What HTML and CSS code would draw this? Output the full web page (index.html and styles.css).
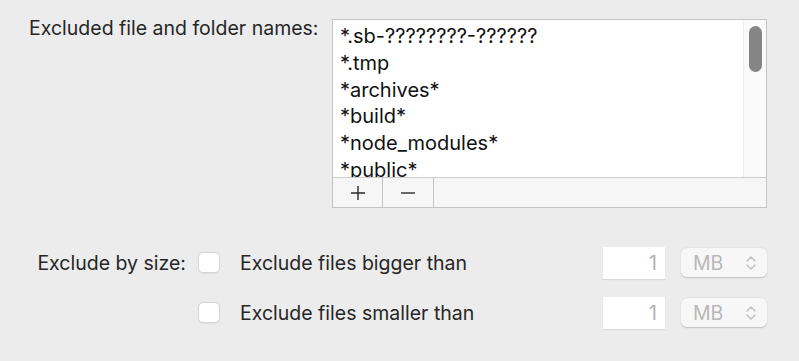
FILE: index.html
```html
<!DOCTYPE html>
<html>
<head>
<meta charset="utf-8">
<link rel="stylesheet" href="styles.css">
</head>
<body>
<div class="pane">
  <section class="names">
    <div class="names-label">Excluded file and folder names:</div>
    <div class="listbox">
      <div class="list-area">
        <ul class="list">
          <li>*.sb-????????-??????</li>
          <li>*.tmp</li>
          <li>*archives*</li>
          <li>*build*</li>
          <li>*node_modules*</li>
          <li>*public*</li>
        </ul>
        <div class="scrolltrack"><div class="thumb"></div></div>
      </div>
      <div class="toolbar">
        <button class="tbtn">
          <svg width="16" height="16" viewBox="0 0 16 16"><path d="M8 1v14M1 8h14" stroke="#2a2a2a" stroke-width="1.4" fill="none"/></svg>
        </button>
        <button class="tbtn">
          <svg width="16" height="16" viewBox="0 0 16 16"><path d="M1 8h14" stroke="#2a2a2a" stroke-width="1.4" fill="none"/></svg>
        </button>
        <div class="tfill"></div>
      </div>
    </div>
  </section>

  <section class="sizes">
    <div class="size-row">
      <div class="size-label">Exclude by size:</div>
      <span class="check"></span>
      <div class="size-text">Exclude files bigger than</div>
      <div class="numfield">1</div>
      <div class="popup"><span class="popup-val">MB</span><svg class="chev" width="12" height="18" viewBox="0 0 12 18"><path d="M2 7l4-4 4 4M2 11l4 4 4-4" stroke="#c2c2c2" stroke-width="1.6" fill="none" stroke-linecap="round" stroke-linejoin="round"/></svg></div>
    </div>
    <div class="size-row">
      <div class="size-label"></div>
      <span class="check"></span>
      <div class="size-text">Exclude files smaller than</div>
      <div class="numfield">1</div>
      <div class="popup"><span class="popup-val">MB</span><svg class="chev" width="12" height="18" viewBox="0 0 12 18"><path d="M2 7l4-4 4 4M2 11l4 4 4-4" stroke="#c2c2c2" stroke-width="1.6" fill="none" stroke-linecap="round" stroke-linejoin="round"/></svg></div>
    </div>
  </section>
</div>
</body>
</html>
```

FILE: styles.css
```css
html, body {
  margin: 0;
  padding: 0;
  background: #ececec;
}
body {
  font-family: Inter, "Liberation Sans", sans-serif;
  font-size: 19.5px;
  color: #262626;
  width: 799px;
  height: 361px;
  overflow: hidden;
}
.pane {
  display: flex;
  flex-direction: column;
}
.names {
  display: flex;
  align-items: flex-start;
  padding: 19px 0 0 29px;
  gap: 13px;
}
.names-label {
  width: 290px;
  line-height: 24px;
  margin-top: -3px;
  white-space: nowrap;
}
.listbox {
  width: 433px;
  border: 1px solid #c4c4c4;
  background: #fff;
}
.list-area {
  display: flex;
  height: 157px;
  overflow: hidden;
  border-bottom: 1px solid #cdcdcd;
}
.list {
  list-style: none;
  margin: 0;
  padding: 3px 0 0 7px;
  flex: 1;
  font-size: 20px;
}
.list li {
  height: 26.8px;
  line-height: 27px;
  white-space: nowrap;
  color: #111;
}
.scrolltrack {
  width: 22px;
  border-left: 1px solid #ececec;
  background: #fafafa;
  display: flex;
  justify-content: center;
  padding-top: 6px;
}
.thumb {
  width: 13px;
  height: 46px;
  border-radius: 7px;
  background: #858585;
}
.toolbar {
  display: flex;
  height: 29px;
  background: #f6f6f6;
}
.tbtn {
  width: 50px;
  border: 0;
  border-right: 1px solid #c4c4c4;
  background: #f6f6f6;
  padding: 0;
  margin: 0;
  display: flex;
  align-items: center;
  justify-content: center;
}
.tbtn + .tbtn {
  width: 51px;
}
.tfill {
  flex: 1;
}
.sizes {
  display: flex;
  flex-direction: column;
  gap: 17px;
  padding-top: 38px;
}
.size-row {
  display: flex;
  align-items: center;
  height: 33px;
}
.size-label {
  width: 186px;
  text-align: right;
  white-space: nowrap;
}
.check {
  width: 20px;
  height: 19px;
  margin-left: 12px;
  border: 1px solid #d6d6d6;
  border-radius: 5px;
  background: #fff;
  box-shadow: 0 0.5px 1px rgba(0,0,0,0.05);
}
.size-text {
  margin-left: 20px;
  width: 363px;
  white-space: nowrap;
}
.numfield {
  width: 54px;
  height: 32px;
  padding-right: 8px;
  background: #fff;
  color: #b3b3b3;
  text-align: right;
  line-height: 32px;
  box-shadow: 0 1px 1px rgba(0,0,0,0.08);
}
.popup {
  margin-left: 16px;
  width: 86px;
  height: 29px;
  border-radius: 6px;
  background: #f7f7f7;
  box-shadow: 0 0.5px 1.5px rgba(0,0,0,0.18);
  display: flex;
  align-items: center;
  justify-content: space-between;
  padding: 0 10px 0 12px;
  box-sizing: border-box;
  color: #b8b8b8;
}
.chev {
  display: block;
}
```
